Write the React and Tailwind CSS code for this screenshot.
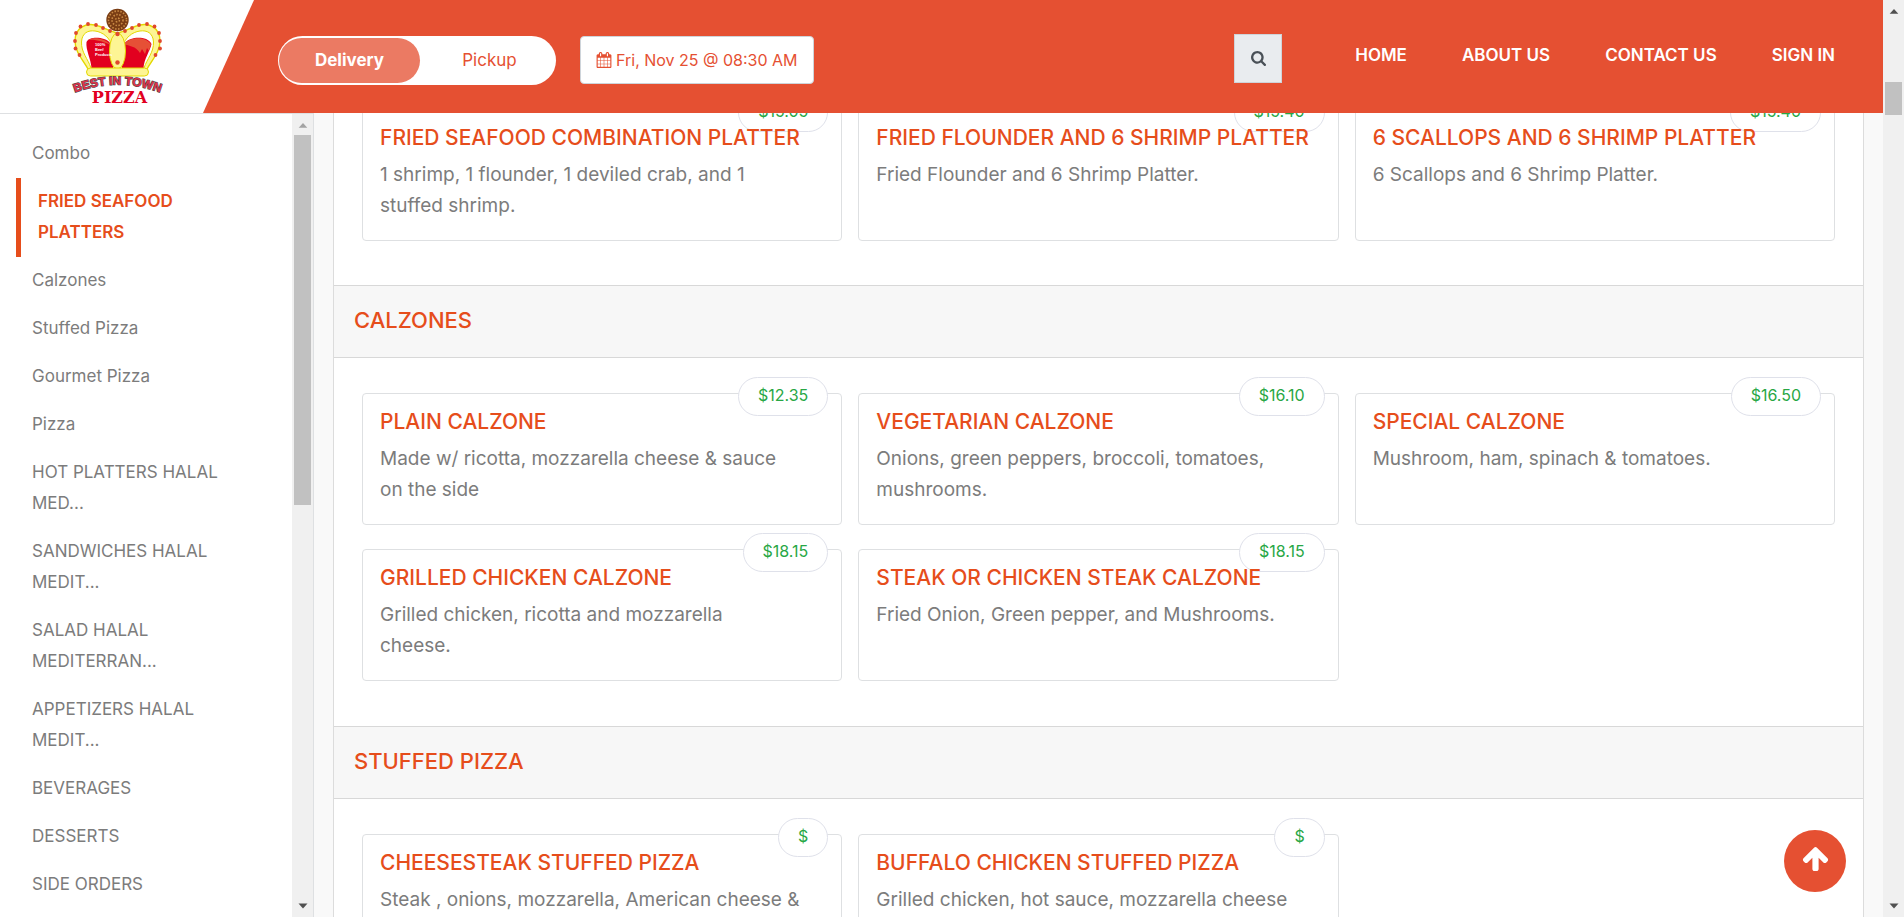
const SIDEBAR = [
  'Combo',
  'FRIED SEAFOOD PLATTERS',
  'Calzones',
  'Stuffed Pizza',
  'Gourmet Pizza',
  'Pizza',
  'HOT PLATTERS HALAL MED...',
  'SANDWICHES HALAL MEDIT...',
  'SALAD HALAL MEDITERRAN...',
  'APPETIZERS HALAL MEDIT...',
  'BEVERAGES',
  'DESSERTS',
  'SIDE ORDERS',
];
const ACTIVE = 'FRIED SEAFOOD PLATTERS';

const SECTIONS = [
  {
    title: 'CALZONES',
    items: [
      ['PLAIN CALZONE', '$12.35', 'Made w/ ricotta, mozzarella cheese & sauce\non the side'],
      ['VEGETARIAN CALZONE', '$16.10', 'Onions, green peppers, broccoli, tomatoes,\nmushrooms.'],
      ['SPECIAL CALZONE', '$16.50', 'Mushroom, ham, spinach & tomatoes.'],
      ['GRILLED CHICKEN CALZONE', '$18.15', 'Grilled chicken, ricotta and mozzarella\ncheese.'],
      ['STEAK OR CHICKEN STEAK CALZONE', '$18.15', 'Fried Onion, Green pepper, and Mushrooms.'],
    ],
  },
  {
    title: 'STUFFED PIZZA',
    items: [
      ['CHEESESTEAK STUFFED PIZZA', '$', 'Steak , onions, mozzarella, American cheese &\nsauce.'],
      ['BUFFALO CHICKEN STUFFED PIZZA', '$', 'Grilled chicken, hot sauce, mozzarella cheese\nand sauce.'],
    ],
  },
];

const SEAFOOD = [
  ['FRIED SEAFOOD COMBINATION PLATTER', '$15.05', '1 shrimp, 1 flounder, 1 deviled crab, and 1\nstuffed shrimp.'],
  ['FRIED FLOUNDER AND 6 SHRIMP PLATTER', '$15.40', 'Fried Flounder and 6 Shrimp Platter.'],
  ['6 SCALLOPS AND 6 SHRIMP PLATTER', '$15.40', '6 Scallops and 6 Shrimp Platter.'],
];

function Card({ item: [name, price, text] }) {
  return (
    <article className="relative rounded border border-[#dee0e2] bg-white px-[17px] pt-[14px] pb-[14px]">
      <span className="absolute right-[13px] -top-[17px] flex h-[39px] items-center rounded-full border border-[#dfe1ea] bg-white px-[19px] pb-1 text-[16px] text-[#28a745]">
        {price}
      </span>
      <h3 className="relative text-[21px] leading-[28px] font-medium text-[#e64d1b]">{name}</h3>
      <p className="mt-[7px] mb-[5px] min-h-[62px] text-[19px] leading-[31px] whitespace-pre-line text-[#7c7c7c]">{text}</p>
    </article>
  );
}

function Cards({ items }) {
  return (
    <div className="grid grid-cols-3 gap-x-4 gap-y-6 px-7">
      {items.map((item) => (
        <Card key={item[0]} item={item} />
      ))}
    </div>
  );
}

function Scrollbar({ className, thumb, upColor }) {
  return (
    <div aria-hidden="true" className={'flex shrink-0 flex-col items-center bg-[#f0f0f0] ' + className}>
      <svg viewBox="0 0 20 22" className={'h-[21px] w-5 shrink-0 ' + upColor}>
        <path d="M5.500 14.500 10 9.500l4.500 5z" fill="currentColor" />
      </svg>
      <div className={'w-[17px] bg-[#c1c1c1] ' + thumb} />
      <svg viewBox="0 0 20 22" className="mt-auto h-[22px] w-5 shrink-0 text-[#505050]">
        <path d="M5.500 8.500h9L10 13.500z" fill="currentColor" />
      </svg>
    </div>
  );
}

const BEADS = [
  [80.500, 26.500], [88, 24], [96, 25], [103, 28], [110, 31], [76, 33], [75, 41], [75.500, 48.500], [79.500, 55],
  [154.500, 26.500], [147, 24], [139, 25], [132, 28], [125, 31], [159, 33], [160, 41], [160, 48.500], [155.500, 55],
];

function Logo() {
  return (
    <svg viewBox="70 5 94 102" className="h-[102px] w-[94px]" role="img" aria-label="Best in Town Pizza">
      <defs>
        <path id="arc" d="M75 92.500 Q117 77 160 92.500" />
      </defs>
      <path
        d="M88 69 C83 60 75 52 75 41 C75 28 85 23 95 25 C104 27 110 32 117.500 33 C125 32 131 27 140 25 C150 23 160 28 160 41 C160 52 152 60 147 69 Z"
        fill="#fdf594" stroke="#e3d800" strokeWidth="1.400"
      />
      <path
        d="M91 68 C88 59 81 52 81.500 42 C82 33 88 30 95 31 C103 32 110 38 112 46 V68 Z M144 68 C147 59 154 52 153.500 42 C153 33 147 30 140 31 C132 32 125 38 123 46 V68 Z"
        fill="#fff" stroke="#e3d800"
      />
      <path
        d="M91.500 68 C91 59 85.500 50 86.500 42 C89 37 98 37 104 39 C110 41 112 45 113 50 V68 Z M143.500 68 C144 59 150.500 50 151.500 44 C148 37 137 37 131 39 C125 41 123 45 122 50 V68 Z"
        fill="#e2001f"
      />
      <path
        d="M88 40 C94 36 106 39 111 45 C104 42 95 39 88 40 Z M124 44 C129 38 143 35 151 44 L149 51 L147 48 L145 54 L142 49 L140 53 C136 46 129 46 124 44 Z"
        fill="#e65036"
      />
      <ellipse cx="117.500" cy="51" rx="8" ry="18" fill="#fdf594" stroke="#e3d800" />
      <rect x="86.500" y="68" width="62" height="8" rx="4" fill="#fdf594" stroke="#e3d800" />
      {BEADS.map(([x, y]) => (
        <circle key={x + ',' + y} cx={x} cy={y} r="1.900" fill="#e0482c" />
      ))}
      <circle cx="117.500" cy="34" r="2.200" fill="#e0482c" />
      <circle cx="117.500" cy="62.500" r="2.200" fill="#e0482c" />
      <circle cx="117.500" cy="20" r="11.200" fill="#7a3d14" />
      <circle cx="117.500" cy="20" r="9" fill="none" stroke="#c98a45" strokeWidth="1.600" strokeDasharray="1.500 1.500" />
      <circle cx="117.500" cy="20" r="5.500" fill="none" stroke="#c98a45" strokeWidth="1.600" strokeDasharray="1.500 1.500" />
      <circle cx="117.500" cy="20" r="2" fill="none" stroke="#c98a45" strokeWidth="1.500" strokeDasharray="1.500 1.500" />
      <g fill="#fff" fontSize="4" fontWeight="700" fontFamily="Liberation Sans, sans-serif">
        <text x="95" y="46">100%</text>
        <text x="95" y="51">Beef</text>
        <text x="95" y="56">Products</text>
      </g>
      <text
        fontSize="12" fontWeight="700" fontFamily="Liberation Sans, sans-serif" textAnchor="middle"
        fill="#e0334a" stroke="#4a4446" strokeWidth="1.200" paintOrder="stroke"
      >
        <textPath href="#arc" startOffset="50%">BEST IN TOWN</textPath>
      </text>
      <text x="119.500" y="102.500" fill="#e2001f" fontSize="16" fontWeight="700" fontFamily="DejaVu Serif, serif" textAnchor="middle">
        PIZZA
      </text>
    </svg>
  );
}

function Header() {
  return (
    <header className="relative z-20 flex h-[113px] shrink-0 bg-[#e55032]">
      <div className="w-[254px] shrink-0 bg-white pl-[70px] pt-[5px] [clip-path:polygon(0_0,100%_0,203px_100%,0_100%)]">
        <a href="#home" className="block w-[94px]"><Logo /></a>
      </div>
      <div className="ml-6 mt-9 flex h-[49px] shrink-0 rounded-full bg-white p-px text-[17px]">
        <button type="button" className="my-px w-[141px] rounded-full bg-[#eb7a63] font-bold text-white">Delivery</button>
        <button type="button" className="w-[135px] rounded-full pl-1 text-[#e55032]">Pickup</button>
      </div>
      <button type="button" className="ml-6 mt-9 flex h-12 shrink-0 items-center gap-1 rounded border border-[#ced4da] bg-white px-[15px] text-[16px] text-[#e55032]">
        <svg viewBox="0 0 1792 1792" className="size-4" fill="currentColor" aria-hidden="true">
          <path d="M192 1664h288v-288h-288v288zm352 0h320v-288h-320v288zm-352-352h288v-320h-288v320zm352 0h320v-320h-320v320zm-352-384h288v-288h-288v288zm736 736h320v-288h-320v288zm-384-736h320v-288h-320v288zm768 736h288v-288h-288v288zm-384-352h320v-320h-320v320zm-352-864v-288q0-13-9.500-22.500t-22.500-9.500h-64q-13 0-22.500 9.500t-9.500 22.500v288q0 13 9.500 22.500t22.500 9.500h64q13 0 22.500-9.500t9.500-22.500zm736 864h288v-320h-288v320zm-384-384h320v-288h-320v288zm384 0h288v-288h-288v288zm32-480v-288q0-13-9.500-22.500t-22.500-9.500h-64q-13 0-22.500 9.500t-9.500 22.500v288q0 13 9.500 22.500t22.500 9.500h64q13 0 22.500-9.500t9.500-22.500zm384-64v1280q0 52-38 90t-90 38h-1408q-52 0-90-38t-38-90v-1280q0-52 38-90t90-38h128v-96q0-66 47-113t113-47h64q66 0 113 47t47 113v96h384v-96q0-66 47-113t113-47h64q66 0 113 47t47 113v96h128q52 0 90 38t38 90z" />
        </svg>
        Fri, Nov 25 @ 08:30 AM
      </button>
      <div className="ml-auto flex items-start pr-12">
        <button type="button" aria-label="Search" className="mt-[34px] flex h-[49px] w-12 items-center justify-center border border-[#ced4da] bg-[#e9ecef] text-[#495057]">
          <svg viewBox="0 0 1664 1664" className="size-[15px]" fill="currentColor" aria-hidden="true">
            <path d="M1152 704q0-185-131.500-316.500T704 256 387.500 387.500 256 704t131.500 316.500T704 1152t316.500-131.500T1152 704zm512 832q0 52-38 90t-90 38q-54 0-90-38l-343-342q-179 124-399 124-143 0-273.500-55.500t-225-150-150-225T0 704t55.500-273.500 150-225 225-150T704 0t273.500 55.500 225 150 150 225T1408 704q0 220-124 399l343 343q37 37 37 90z" />
          </svg>
        </button>
        <nav className="ml-[73px] mt-[43px] flex gap-[55px] text-[17px] leading-6 font-semibold text-white">
          <a href="#home">HOME</a>
          <a href="#about">ABOUT US</a>
          <a href="#contact">CONTACT US</a>
          <a href="#signin">SIGN IN</a>
        </nav>
      </div>
    </header>
  );
}

export default function App() {
  return (
    <div className="flex h-screen overflow-hidden bg-[#f9f9f9] font-[Inter,sans-serif]">
      <div className="relative flex min-w-0 flex-1 flex-col">
        <Header />
        <div className="flex min-h-0 flex-1">
          <aside className="flex w-[314px] shrink-0 border-t border-r border-[#dee0e2] bg-white">
            <nav className="min-w-0 flex-1 overflow-hidden pt-4 pr-14 pl-4 text-[17px] leading-[31px] text-[#7c7c7c]">
              {SIDEBAR.map((name) => (
                <a
                  key={name}
                  href="#menu"
                  className={
                    name === ACTIVE
                      ? 'block border-l-[5px] border-[#e64d1b] pt-2 pr-4 pb-[9px] pl-[17px] font-semibold text-[#e64d1b]'
                      : 'block pt-2 pb-[9px] pl-4'
                  }
                >
                  {name}
                </a>
              ))}
            </nav>
            <Scrollbar className="w-[21px]" thumb="h-[370px]" upColor="text-[#a3a3a3]" />
          </aside>
          <main className="mx-[19px] min-w-0 flex-1 overflow-hidden">
            <div className="-mt-1 border-x border-[#dcdcdc] bg-white">
              <section className="pb-11">
                <Cards items={SEAFOOD} />
              </section>
              {SECTIONS.map((s) => (
                <section key={s.title} className="pb-[45px]">
                  <h2 className="mb-[35px] flex h-[73px] items-center border-y border-[#d8d8d8] bg-[#f7f7f7] px-5 pb-[2px] text-[22px] font-medium text-[#e64d1b]">
                    {s.title}
                  </h2>
                  <Cards items={s.items} />
                </section>
              ))}
            </div>
          </main>
        </div>
        <button type="button" aria-label="Back to top" className="absolute right-[37px] bottom-[25px] flex size-[62px] items-center justify-center rounded-full bg-[#e55032] pb-[6px] text-white">
          <svg viewBox="0 0 1792 1792" className="size-[29px]" fill="currentColor" aria-hidden="true">
            <path d="M1675 971q0 51-37 90l-75 75q-38 38-91 38-54 0-90-38l-294-293v704q0 52-37.500 84.500t-90.500 32.500h-128q-53 0-90.500-32.500t-37.500-84.500v-704l-294 293q-36 38-90 38t-90-38l-75-75q-38-38-38-90 0-53 38-91l651-651q35-37 90-37 54 0 91 37l651 651q37 39 37 91z" />
          </svg>
        </button>
      </div>
      <Scrollbar className="w-[21px]" thumb="mt-[61px] h-[33px]" upColor="text-[#505050]" />
    </div>
  );
}
